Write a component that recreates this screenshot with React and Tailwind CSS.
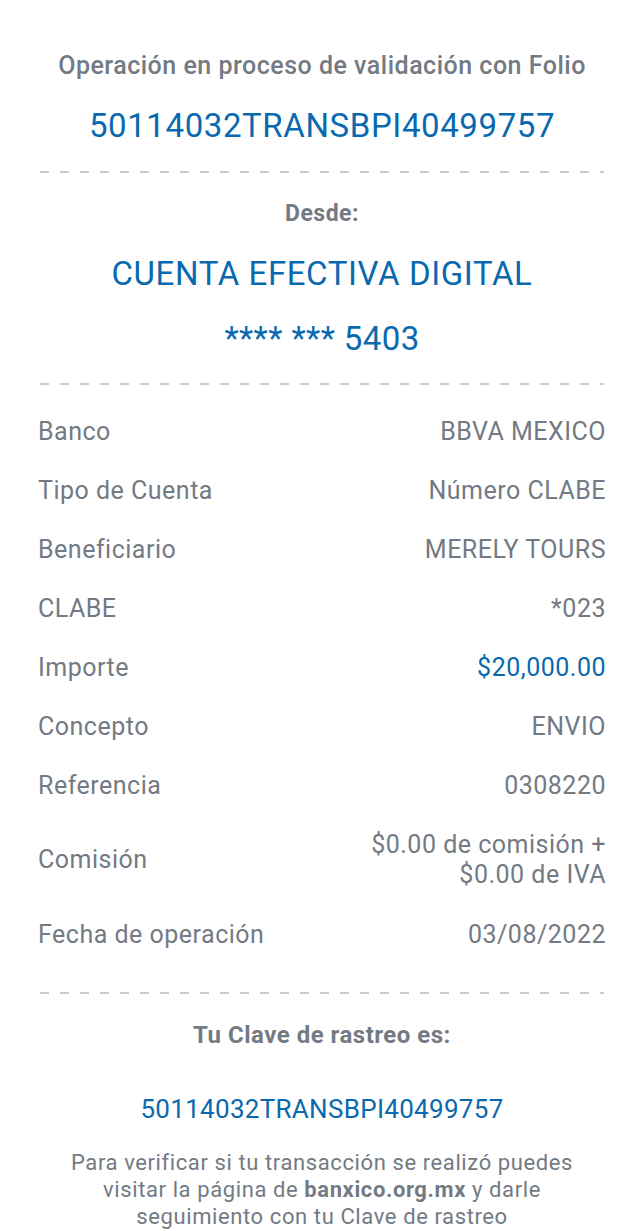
import React from "react";

const rows = [
  { label: "Banco", value: "BBVA MEXICO" },
  { label: "Tipo de Cuenta", value: "Número CLABE" },
  { label: "Beneficiario", value: "MERELY TOURS" },
  { label: "CLABE", value: "*023" },
  { label: "Importe", value: "$20,000.00", blue: true },
  { label: "Concepto", value: "ENVIO" },
  { label: "Referencia", value: "0308220" },
];

function Divider() {
  return (
    <div className="mx-[2px] h-[2px] bg-[repeating-linear-gradient(90deg,#c9cbce_0_9px,transparent_9px_20px)]" />
  );
}

function Row({ label, children, className = "" }) {
  return (
    <div className={`flex items-center justify-between ${className}`}>
      <span>{label}</span>
      <div className="text-right">{children}</div>
    </div>
  );
}

export default function App() {
  return (
    <div className="min-h-[1231px] bg-white px-[38px] font-['Roboto',sans-serif] text-[#737a83]">
      <div className="pt-[48px] text-center">
        <p className="text-[25px] font-medium leading-[36px] tracking-[0.5px]">
          Operación en proceso de validación con Folio
        </p>
        <p className="mt-[24px] text-[33px] leading-[36px] tracking-[0.6px] text-[#0a69ae]">
          50114032TRANSBPI40499757
        </p>
      </div>

      <div className="mt-[27px]">
        <Divider />
      </div>

      <div className="text-center">
        <p className="mt-[25px] text-[23px] font-bold leading-[32px] tracking-[0.5px]">Desde:</p>
        <p className="mt-[26px] text-[33px] leading-[36px] tracking-[0.6px] text-[#0a69ae]">
          CUENTA EFECTIVA DIGITAL
        </p>
        <p className="mt-[29px] text-[33px] leading-[36px] tracking-[0.4px] text-[#0a69ae]">
          **** *** 5403
        </p>
      </div>

      <div className="mt-[26px]">
        <Divider />
      </div>

      <div className="mt-[27px] text-[25px] leading-[40px] tracking-[0.5px]">
        {rows.map((r) => (
          <Row key={r.label} label={r.label} className="mb-[19px]">
            <span className={r.blue ? "text-[#0a69ae]" : ""}>{r.value}</span>
          </Row>
        ))}
        <Row label="Comisión" className="pt-[5px] mb-[25px]">
          <p className="leading-[30px]">$0.00 de comisión +</p>
          <p className="leading-[30px]">$0.00 de IVA</p>
        </Row>
        <Row label="Fecha de operación">
          <span>03/08/2022</span>
        </Row>
      </div>

      <div className="mt-[37px]">
        <Divider />
      </div>

      <div className="text-center">
        <p className="mt-[24px] text-[24px] font-bold leading-[34px] tracking-[0.5px]">
          Tu Clave de rastreo es:
        </p>
        <p className="mt-[40px] text-[26px] leading-[34px] tracking-[0.3px] text-[#0a69ae]">
          50114032TRANSBPI40499757
        </p>
        <p className="mt-[23px] text-[22px] leading-[27px] tracking-[0.6px]">
          Para verificar si tu transacción se realizó puedes
          <br />
          visitar la página de <span className="font-bold">banxico.org.mx</span> y darle
          <br />
          seguimiento con tu Clave de rastreo
        </p>
      </div>
    </div>
  );
}
